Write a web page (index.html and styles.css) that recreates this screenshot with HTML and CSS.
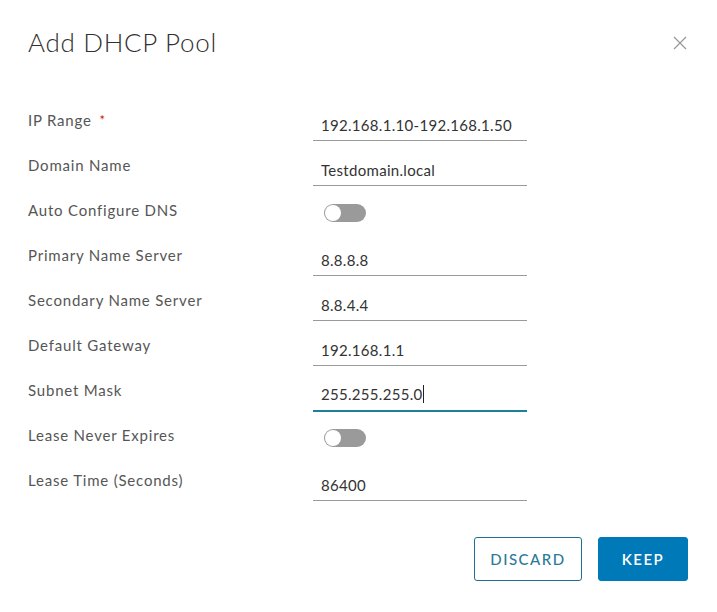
FILE: index.html
```html
<!DOCTYPE html>
<html lang="en">
<head>
    <meta charset="UTF-8">
    <title>Add DHCP Pool</title>
    <link rel="stylesheet" href="styles.css">
</head>
<body>
    <div class="modal">
        <div class="modal-header">
            <h2 class="modal-title">Add DHCP Pool</h2>
            <button class="close" aria-label="Close">
                <svg width="14" height="14" viewBox="0 0 14 14">
                    <path d="M1 1 L13 13 M13 1 L1 13" stroke="#9a9a9a" stroke-width="1.3" fill="none"/>
                </svg>
            </button>
        </div>

        <form class="form">
            <div class="row">
                <label class="label">IP Range <span class="req">*</span></label>
                <div class="field"><input class="input" type="text" value="192.168.1.10-192.168.1.50"></div>
            </div>
            <div class="row">
                <label class="label">Domain Name</label>
                <div class="field"><input class="input" type="text" value="Testdomain.local"></div>
            </div>
            <div class="row">
                <label class="label">Auto Configure DNS</label>
                <div class="field"><span class="toggle"></span></div>
            </div>
            <div class="row">
                <label class="label">Primary Name Server</label>
                <div class="field"><input class="input" type="text" value="8.8.8.8"></div>
            </div>
            <div class="row">
                <label class="label">Secondary Name Server</label>
                <div class="field"><input class="input" type="text" value="8.8.4.4"></div>
            </div>
            <div class="row">
                <label class="label">Default Gateway</label>
                <div class="field"><input class="input" type="text" value="192.168.1.1"></div>
            </div>
            <div class="row">
                <label class="label">Subnet Mask</label>
                <div class="field"><div class="input focused">255.255.255.0<span class="caret"></span></div></div>
            </div>
            <div class="row">
                <label class="label">Lease Never Expires</label>
                <div class="field"><span class="toggle"></span></div>
            </div>
            <div class="row">
                <label class="label">Lease Time (Seconds)</label>
                <div class="field"><input class="input" type="text" value="86400"></div>
            </div>
        </form>

        <div class="modal-footer">
            <button class="btn btn-outline">DISCARD</button>
            <button class="btn btn-primary">KEEP</button>
        </div>
    </div>
</body>
</html>
```

FILE: styles.css
```css
body {
    margin: 0;
    background-color: #fff;
    font-family: Lato, "Open Sans", sans-serif;
    color: #565656;
}
.modal {
    width: 717px;
    height: 612px;
    box-sizing: border-box;
    padding: 26px 29px 0 28px;
}
.modal-header {
    display: flex;
    justify-content: space-between;
    align-items: flex-start;
    height: 74px;
}
.modal-title {
    margin: 0;
    font-size: 26px;
    font-weight: 300;
    letter-spacing: 0.7px;
    color: #313131;
    line-height: 32px;
}
.close {
    border: none;
    background: none;
    padding: 0;
    margin: 10px 1px 0 0;
    width: 14px;
    height: 14px;
    cursor: pointer;
}
.form {
    display: flex;
    flex-direction: column;
}
.row {
    display: grid;
    grid-template-columns: 285px 214px;
    height: 45px;
}
.label {
    font-size: 15px;
    line-height: 20px;
    letter-spacing: 0.8px;
    margin-top: 10px;
    color: #565656;
}
.req {
    color: #c92100;
    margin-left: 3px;
    font-size: 13px;
    vertical-align: top;
}
.field {
    padding-top: 12px;
}
.input {
    box-sizing: border-box;
    width: 214px;
    height: 29px;
    border: none;
    border-bottom: 1px solid #9a9a9a;
    padding: 0 0 3px 8px;
    font-family: inherit;
    font-size: 15px;
    letter-spacing: 0.3px;
    color: #333;
    outline: none;
    background: transparent;
    line-height: 25px;
}
.input.focused {
    border-bottom: 2px solid #1d7f99;
    height: 30px;
}
.caret {
    display: inline-block;
    width: 1px;
    height: 18px;
    background: #222;
    vertical-align: -3px;
}
.toggle {
    display: inline-block;
    position: relative;
    margin: 2px 0 0 11px;
    width: 42px;
    height: 18px;
    border-radius: 9px;
    background-color: #9a9a9a;
}
.toggle::before {
    content: "";
    position: absolute;
    left: 1px;
    top: 1px;
    width: 16px;
    height: 16px;
    border-radius: 50%;
    background: #fff;
}
.modal-footer {
    display: flex;
    justify-content: flex-end;
    gap: 16px;
    margin-top: 32px;
}
.btn {
    height: 44px;
    border-radius: 3px;
    font-family: inherit;
    font-size: 15px;
    letter-spacing: 1.5px;
    font-weight: 600;
    cursor: pointer;
}
.btn-outline {
    width: 108px;
    background: #fff;
    color: #2a7a99;
    border: 1px solid #1d6f8e;
    font-weight: 500;
}
.btn-primary {
    width: 90px;
    background: #0079b8;
    color: #fff;
    border: 1px solid #0079b8;
}
```
